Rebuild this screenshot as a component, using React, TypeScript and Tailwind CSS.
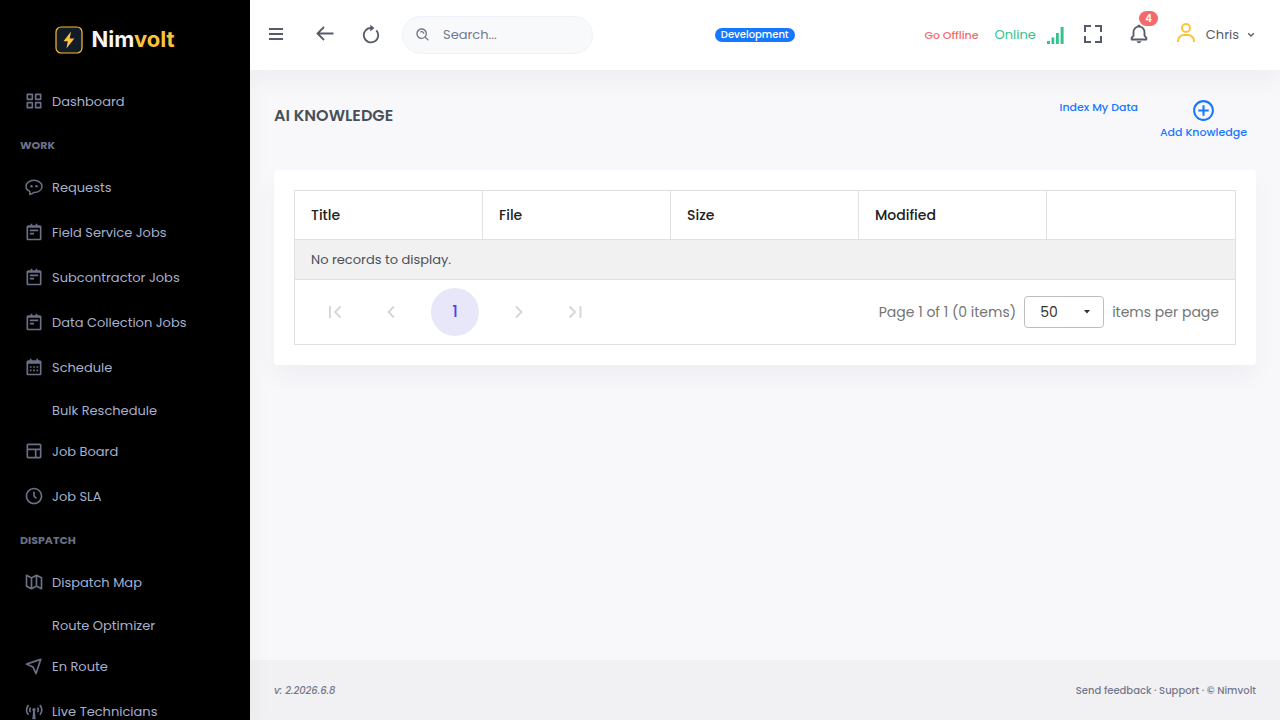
import { useState } from "react";
import type { ReactNode } from "react";
import {
    BiBell,
    BiBroadcast,
    BiCalendar,
    BiFullscreen,
    BiGridAlt,
    BiLayout,
    BiMapAlt,
    BiNavigation,
    BiNotepad,
    BiPlusCircle,
    BiSearchAlt,
    BiTimeFive,
    BiUser,
} from "react-icons/bi";

type NavItem = {
    label: string;
    icon?: ReactNode;
};

type NavGroup = {
    title?: string;
    items: NavItem[];
};

function ChatIcon() {
    return (
        <svg viewBox="0 0 20 20" width="20" height="20" fill="none" stroke="currentColor" strokeWidth="1.5">
            <path d="M5.6 14.1C3.3 13.1 2 11.500 2 9.400 2 6 5.500 3.300 10 3.300s8 2.700 8 6.100-3.500 6.100-8 6.100h-.4c-1 1-2.200 1.700-3.800 2 .4-1 .3-2.200-.2-3.400z" strokeLinejoin="round" />
            <circle cx="7.500" cy="9.300" r="1.200" fill="currentColor" stroke="none" />
            <circle cx="12.500" cy="9.300" r="1.200" fill="currentColor" stroke="none" />
        </svg>
    );
}

const groups: NavGroup[] = [
    { items: [{ label: "Dashboard", icon: <BiGridAlt size={20} /> }] },
    {
        title: "WORK",
        items: [
            { label: "Requests", icon: <ChatIcon /> },
            { label: "Field Service Jobs", icon: <BiNotepad size={20} /> },
            { label: "Subcontractor Jobs", icon: <BiNotepad size={20} /> },
            { label: "Data Collection Jobs", icon: <BiNotepad size={20} /> },
            { label: "Schedule", icon: <BiCalendar size={20} /> },
            { label: "Bulk Reschedule" },
            { label: "Job Board", icon: <BiLayout size={20} /> },
            { label: "Job SLA", icon: <BiTimeFive size={20} /> },
        ],
    },
    {
        title: "DISPATCH",
        items: [
            { label: "Dispatch Map", icon: <BiMapAlt size={20} /> },
            { label: "Route Optimizer" },
            { label: "En Route", icon: <BiNavigation size={20} /> },
            { label: "Live Technicians", icon: <BiBroadcast size={20} /> },
        ],
    },
];

function Sidebar() {
    return (
        <aside className="relative w-[250px] shrink-0 overflow-hidden bg-black shadow-[0_12px_24px_rgba(18,18,63,0.04)]">
            <a href="#" className="flex h-[79px] items-center justify-center gap-2 pr-5">
                <svg viewBox="0 0 28 28" width="28" height="28">
                    <rect x="1" y="1" width="26" height="26" rx="5" fill="#111c27" stroke="#fbbc34" strokeWidth="1.200" />
                    <path d="M16 5.500 8.500 15.300h4.300L11.400 22.500 19.300 12.500h-4.600z" fill="#fdc23c" />
                </svg>
                <span className="font-[Inter,sans-serif] text-[22px] font-bold text-[#f3f5f8]">
                    Nim<span className="text-[#fdc23c]">volt</span>
                </span>
            </a>
            <nav>
                {groups.map((group, i) => (
                    <div key={i}>
                        {group.title && (
                            <h2 className="flex h-[41px] items-center px-5 pt-0.5 text-[11px] font-bold text-[#6a7187]">
                                {group.title}
                            </h2>
                        )}
                        <ul>
                            {group.items.map((item) => (
                                <li key={item.label}>
                                    {item.icon ? (
                                        <a href="#" className="flex h-[45px] items-center gap-2 pl-6 text-[13px] text-[#a6b0cf]">
                                            <span className="pb-0.5 text-[#6a7187]">{item.icon}</span>
                                            {item.label}
                                        </a>
                                    ) : (
                                        <a href="#" className="flex h-[39px] items-center pt-0.5 pl-[52px] text-[13px] text-[#a6b0cf]">
                                            {item.label}
                                        </a>
                                    )}
                                </li>
                            ))}
                        </ul>
                    </div>
                ))}
            </nav>
        </aside>
    );
}

function Header() {
    return (
        <header className="relative flex h-[70px] shrink-0 items-center bg-white text-[#555b6d] shadow-[0_12px_24px_rgba(18,18,63,0.04)]">
            <div className="flex items-center pb-0.5">
                <button type="button" aria-label="Menu" className="flex w-[52px] justify-center">
                    <svg viewBox="0 0 14 12" width="14" height="12" fill="currentColor">
                        <path d="M0 0h14v2H0zM0 5h14v2H0zM0 10h14v2H0z" />
                    </svg>
                </button>
                <button type="button" aria-label="Back" className="flex w-[46px] justify-center">
                    <svg viewBox="0 0 18 16" width="18" height="16" fill="none" stroke="currentColor" strokeWidth="1.800">
                        <path d="M17.500 7.500H1.500M8 1 1.500 7.500 8 14" />
                    </svg>
                </button>
                <button type="button" aria-label="Refresh" className="flex w-[46px] justify-center">
                    <svg viewBox="0 0 18 20" width="18" height="20" fill="none" stroke="currentColor" strokeWidth="1.800">
                        <path d="M14.300 6.300A7.200 7.200 0 1 1 9 4" />
                        <path d="M8.300.8 12.400 4 8.300 7.400z" fill="currentColor" stroke="none" />
                    </svg>
                </button>
            </div>
            <label className="ml-2 flex h-[38px] w-[191px] items-center gap-3 rounded-full border border-[#eff2f7] bg-[#f8f9fb] pl-3 text-[#74788d]">
                <BiSearchAlt size={16} className="shrink-0" />
                <input
                    type="text"
                    placeholder="Search..."
                    aria-label="Search"
                    className="w-full bg-transparent text-[13px] outline-none placeholder:text-[#74788d]"
                />
            </label>
            <div className="flex flex-1 justify-center pr-2">
                <span className="rounded-full bg-[#1677ff] px-1.5 text-[10px] leading-[14px] font-medium text-white">
                    Development
                </span>
            </div>
            <button type="button" className="text-[11px] font-medium text-[#f46a6a]">Go Offline</button>
            <span className="ml-4 text-[13px] text-[#34c38f]">Online</span>
            <svg viewBox="0 0 17 17" width="17" height="17" fill="#34c38f" className="mr-1.5 ml-[11px]">
                <path d="M0 14h3v3H0zM4.500 10.500h2.800V17H4.500zM9 6h2.800v11H9zM13.600 0h3v17h-3z" />
            </svg>
            <div className="flex items-center pb-0.5">
                <button type="button" aria-label="Full screen" className="flex w-[46px] justify-center">
                    <BiFullscreen size={24} />
                </button>
                <button type="button" aria-label="Notifications" className="relative flex w-[46px] justify-center">
                    <BiBell size={22} />
                    <span className="absolute -top-3 right-1 rounded-full bg-[#f46a6a] px-1.5 text-[10px] leading-[15px] font-semibold text-white">
                        4
                    </span>
                </button>
            </div>
            <button type="button" className="mr-[25px] ml-3 flex items-center gap-2 text-[13px]">
                <BiUser size={24} className="mb-1 text-[#fdc23c]" />
                Chris
                <svg viewBox="0 0 8 6" width="8" height="6" fill="none" stroke="currentColor" strokeWidth="1.300">
                    <path d="m1.200 1.200 2.800 2.800 2.800-2.800" />
                </svg>
            </button>
        </header>
    );
}

function PagerButton({ label, path }: { label: string; path: string }) {
    return (
        <button type="button" aria-label={label} disabled className="flex size-12 items-center justify-center text-[#d5d5d5]">
            <svg viewBox="0 0 14 14" width="14" height="14" fill="none" stroke="currentColor" strokeWidth="1.800">
                <path d={path} />
            </svg>
        </button>
    );
}

function Pager() {
    const [pageSize, setPageSize] = useState("50");

    return (
        <div className="flex h-[65px] items-center justify-between border-t border-[#e0e0e0] px-4 text-sm text-[#757575]">
            <div className="flex items-center gap-2">
                <PagerButton label="First page" path="M2 1v12M12.500 1.500 7 7l5.500 5.500" />
                <PagerButton label="Previous page" path="M10 1.500 4.500 7l5.500 5.500" />
                <button type="button" className="mx-2 size-12 rounded-full bg-[#e8e7f9] text-base font-medium text-[#4f46d8]">
                    1
                </button>
                <PagerButton label="Next page" path="M4 1.500 9.500 7 4 12.500" />
                <PagerButton label="Last page" path="M1.500 1.500 7 7l-5.500 5.500M12.500 1v12" />
            </div>
            <div className="flex items-center gap-2">
                <span>Page 1 of 1 (0 items)</span>
                <div className="relative">
                    <select
                        id="page-size"
                        value={pageSize}
                        onChange={(e) => setPageSize(e.target.value)}
                        className="h-8 w-20 appearance-none rounded border border-[#bdbdbd] bg-white pl-[15px] text-sm text-[#333]"
                    >
                        <option>10</option>
                        <option>20</option>
                        <option>50</option>
                    </select>
                    <svg viewBox="0 0 6 4" width="6" height="4" fill="#333" className="pointer-events-none absolute top-3.5 right-3.5">
                        <path d="M0 0h6L3 3.600z" />
                    </svg>
                </div>
                <label htmlFor="page-size">items per page</label>
            </div>
        </div>
    );
}

const columns = ["Title", "File", "Size", "Modified", ""];

export default function App() {
    return (
        <div className="flex h-screen bg-[#f8f8fb] font-[Poppins,Inter,sans-serif]">
            <Sidebar />
            <div className="flex min-w-0 flex-1 flex-col">
                <Header />
                <main className="flex-1 px-6">
                    <div className="flex h-[100px] items-start justify-between pt-7">
                        <h1 className="pt-1.5 text-base leading-6 font-semibold text-[#495057]">AI KNOWLEDGE</h1>
                        <div className="flex items-start gap-[22px] pr-[9px] text-[11px] font-medium text-[#1677ff]">
                            <button type="button" className="leading-[18px]">Index My Data</button>
                            <button type="button" className="flex flex-col items-center leading-[18px]">
                                <BiPlusCircle size={25} />
                                Add Knowledge
                            </button>
                        </div>
                    </div>
                    <section className="rounded bg-white p-5 shadow-[0_12px_24px_rgba(18,18,63,0.04)]">
                        <div className="border border-[#e0e0e0]">
                            <table className="w-full table-fixed border-separate border-spacing-0 text-left">
                                <thead>
                                    <tr className="h-[49px] text-sm text-[#212121]">
                                        {columns.map((column) => (
                                            <th key={column} className="border-r border-b border-[#e0e0e0] px-4 font-medium last:border-r-0">
                                                {column}
                                            </th>
                                        ))}
                                    </tr>
                                </thead>
                                <tbody>
                                    <tr className="h-[39px] bg-[#f1f1f1]">
                                        <td colSpan={5} className="px-4 text-[13px] text-[#495057]">
                                            No records to display.
                                        </td>
                                    </tr>
                                </tbody>
                            </table>
                            <Pager />
                        </div>
                    </section>
                </main>
                <footer className="flex h-[60px] shrink-0 items-center justify-between bg-[#f1f1f4] px-6 text-[10px] font-medium text-[#74788d]">
                    <span className="italic">v: 2.2026.6.8</span>
                    <span>
                        <a href="#">Send feedback</a> · <a href="#">Support</a> · © Nimvolt
                    </span>
                </footer>
            </div>
        </div>
    );
}
